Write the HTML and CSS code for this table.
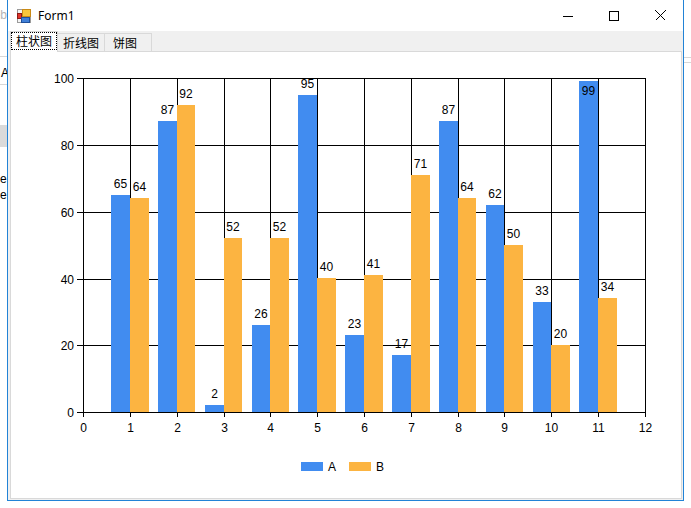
FILE: index.html
```html
<!DOCTYPE html>
<html lang="zh">
<head>
<meta charset="utf-8">
<title>Form1</title>
<link rel="stylesheet" href="styles.css">
</head>
<body>
<div class="desktop">
  <div class="behind behind-left">
    <span class="bk-eb">eb</span>
    <div class="bk-line bk-l1"></div>
    <span class="bk-a">A</span>
    <div class="bk-line bk-l2"></div>
    <div class="bk-block"></div>
    <span class="bk-e1">e</span>
    <span class="bk-e2">e,</span>
  </div>
  <div class="behind behind-right">
    <div class="bk-line bk-r1"></div>
    <div class="bk-line bk-r2"></div>
  </div>

  <div class="window">
    <div class="titlebar">
      <svg class="app-icon" width="16" height="16" viewBox="0 0 16 16">
        <rect x="1.5" y="1.5" width="13" height="13" fill="#f4f4f4" stroke="#9a9a9a"/>
        <rect x="1.5" y="5.5" width="4" height="5" fill="#e0342b" stroke="#8c1a14"/>
        <rect x="6.5" y="1.5" width="8" height="7" fill="#f7c63c" stroke="#c98a16"/>
        <rect x="5.5" y="9.5" width="8" height="5" fill="#3f7fd8" stroke="#1f4f9a"/>
      </svg>
      <span class="title">Form1</span>
      <div class="controls">
        <div class="cbtn"><svg width="10" height="10" viewBox="0 0 10 10"><path d="M0 5.5H10" stroke="#000" stroke-width="1"/></svg></div>
        <div class="cbtn"><svg width="10" height="10" viewBox="0 0 10 10"><rect x="0.5" y="0.5" width="9" height="9" fill="none" stroke="#000"/></svg></div>
        <div class="cbtn"><svg width="11" height="11" viewBox="0 0 11 11"><path d="M0.5 0.5L10.5 10.5M10.5 0.5L0.5 10.5" stroke="#000" stroke-width="1"/></svg></div>
      </div>
    </div>
    <div class="client">
      <div class="tabs">
        <div class="tab tab-active"><span class="focus">柱状图</span></div>
        <div class="tab">折线图</div>
        <div class="tab tab-last">饼图</div>
      </div>
      <div class="page">
        <svg class="chart" width="670" height="446" viewBox="11 52 670 446">
          <g shape-rendering="crispEdges" stroke="#000" stroke-width="1" fill="none">
            <path d="M83.5 78V412M130.5 78V412M177.5 78V412M224.5 78V412M270.5 78V412M317.5 78V412M364.5 78V412M411.5 78V412M458.5 78V412M504.5 78V412M551.5 78V412M598.5 78V412M645.5 78V412"/>
            <path d="M83 78.5H646M83 145.5H646M83 212.5H646M83 279.5H646M83 345.5H646"/>
            <path d="M77 78.5H83M77 145.5H83M77 212.5H83M77 279.5H83M77 345.5H83M77 412.5H83"/>
          </g>
          <g shape-rendering="crispEdges" class="bars-a">
            <rect x="111" y="195" width="19" height="217"/>
            <rect x="158" y="121" width="19" height="291"/>
            <rect x="205" y="405" width="19" height="7"/>
            <rect x="252" y="325" width="18" height="87"/>
            <rect x="298" y="95" width="19" height="317"/>
            <rect x="345" y="335" width="19" height="77"/>
            <rect x="392" y="355" width="19" height="57"/>
            <rect x="439" y="121" width="19" height="291"/>
            <rect x="486" y="205" width="18" height="207"/>
            <rect x="533" y="302" width="18" height="110"/>
            <rect x="579" y="81" width="19" height="331"/>
          </g>
          <g shape-rendering="crispEdges" class="bars-b">
            <rect x="130" y="198" width="19" height="214"/>
            <rect x="177" y="105" width="18" height="307"/>
            <rect x="224" y="238" width="18" height="174"/>
            <rect x="270" y="238" width="19" height="174"/>
            <rect x="317" y="278" width="19" height="134"/>
            <rect x="364" y="275" width="19" height="137"/>
            <rect x="411" y="175" width="19" height="237"/>
            <rect x="458" y="198" width="18" height="214"/>
            <rect x="504" y="245" width="19" height="167"/>
            <rect x="551" y="345" width="19" height="67"/>
            <rect x="598" y="298" width="19" height="114"/>
          </g>
          <g shape-rendering="crispEdges" stroke="#000" stroke-width="1" fill="none">
            <path d="M83 412.5H646"/>
            <path d="M83.5 412V417M130.5 412V417M177.5 412V417M224.5 412V417M270.5 412V417M317.5 412V417M364.5 412V417M411.5 412V417M458.5 412V417M504.5 412V417M551.5 412V417M598.5 412V417M645.5 412V417"/>
          </g>
          <g class="vals" text-anchor="middle">
            <text x="120.5" y="188">65</text>
            <text x="167.5" y="114">87</text>
            <text x="214.5" y="398">2</text>
            <text x="261" y="318">26</text>
            <text x="307.5" y="88">95</text>
            <text x="354.5" y="328">23</text>
            <text x="401.5" y="348">17</text>
            <text x="448.5" y="114">87</text>
            <text x="495" y="198">62</text>
            <text x="542" y="295">33</text>
            <text x="588.5" y="95">99</text>
            <text x="139.5" y="191">64</text>
            <text x="186" y="98">92</text>
            <text x="233" y="231">52</text>
            <text x="279.5" y="231">52</text>
            <text x="326.5" y="271">40</text>
            <text x="373.5" y="268">41</text>
            <text x="420.5" y="168">71</text>
            <text x="467" y="191">64</text>
            <text x="513.5" y="238">50</text>
            <text x="560.5" y="338">20</text>
            <text x="607.5" y="291">34</text>
          </g>
          <g class="axis-y" text-anchor="end">
            <text x="74" y="82.5">100</text>
            <text x="74" y="149.5">80</text>
            <text x="74" y="216.5">60</text>
            <text x="74" y="283.5">40</text>
            <text x="74" y="349.5">20</text>
            <text x="74" y="416.5">0</text>
          </g>
          <g class="axis-x" text-anchor="middle">
            <text x="83.5" y="432">0</text>
            <text x="130.5" y="432">1</text>
            <text x="177.5" y="432">2</text>
            <text x="224.5" y="432">3</text>
            <text x="270.5" y="432">4</text>
            <text x="317.5" y="432">5</text>
            <text x="364.5" y="432">6</text>
            <text x="411.5" y="432">7</text>
            <text x="458.5" y="432">8</text>
            <text x="504.5" y="432">9</text>
            <text x="551.5" y="432">10</text>
            <text x="598.5" y="432">11</text>
            <text x="645.5" y="432">12</text>
          </g>
          <g class="legend">
            <rect class="sw-a" x="301" y="462" width="22" height="9" shape-rendering="crispEdges"/>
            <text x="328" y="471">A</text>
            <rect class="sw-b" x="349" y="462" width="22" height="9" shape-rendering="crispEdges"/>
            <text x="376" y="471">B</text>
          </g>
        </svg>
      </div>
    </div>
  </div>
</div>
</body>
</html>
```
FILE: styles.css
```css
html, body {
  margin: 0;
  padding: 0;
}
body {
  width: 691px;
  height: 508px;
  overflow: hidden;
  background: #ffffff;
  font-family: "Liberation Sans", Arial, sans-serif;
}
.desktop {
  position: relative;
  width: 691px;
  height: 508px;
  overflow: hidden;
  background: #ffffff;
}

/* fragments of the window lying behind */
.behind {
  position: absolute;
  top: 0;
  height: 508px;
  overflow: hidden;
}
.behind-left { left: 0; width: 7px; }
.behind-right { left: 684px; width: 7px; }
.behind span {
  position: absolute;
  font-size: 12px;
  line-height: 14px;
  color: #000;
}
.bk-eb { right: 0; top: 8px; color: #b4b4b4 !important; }
.bk-a { left: 1px; top: 66px; }
.bk-e1 { left: 0; top: 172px; }
.bk-e2 { left: 0; top: 188px; }
.bk-line {
  position: absolute;
  left: 0;
  right: 0;
  height: 1px;
  background: #d7d7d7;
}
.bk-l1 { top: 56px; }
.bk-l2 { top: 84px; }
.bk-r1 { top: 57px; }
.bk-r2 { top: 62px; }
.bk-block {
  position: absolute;
  left: 0;
  right: 0;
  top: 125px;
  height: 22px;
  background: #dadada;
}

/* window */
.window {
  position: absolute;
  left: 7px;
  top: -1px;
  width: 677px;
  height: 502px;
  box-sizing: border-box;
  border: 1px solid #2283d6;
  background: #f0f0f0;
  display: flex;
  flex-direction: column;
}
.titlebar {
  height: 31px;
  flex: none;
  background: #ffffff;
  display: flex;
  align-items: center;
  padding-left: 8px;
}
.app-icon { display: block; flex: none; }
.title {
  margin-left: 6px;
  font-family: "Noto Sans", "Open Sans", sans-serif;
  font-size: 12px;
  color: #000;
  line-height: 16px;
}
.controls {
  margin-left: auto;
  display: flex;
  height: 31px;
}
.cbtn {
  width: 46px;
  height: 31px;
  display: flex;
  align-items: center;
  justify-content: center;
}
.cbtn svg { display: block; shape-rendering: crispEdges; }

.client {
  flex: 1;
  display: flex;
  flex-direction: column;
  padding: 0 1px 1px 2px;
  min-height: 0;
}
.tabs {
  height: 20px;
  flex: none;
  display: flex;
  align-items: flex-end;
  font-family: "Noto Sans CJK SC", sans-serif;
  font-size: 12px;
  color: #000;
}
.tab {
  box-sizing: border-box;
  width: 48px;
  height: 18px;
  border: 1px solid #d9d9d9;
  border-bottom: 0;
  background: #f0f0f0;
  margin-left: -1px;
  padding-left: 5px;
  line-height: 17px;
  white-space: nowrap;
}
.tab-active {
  position: relative;
  z-index: 1;
  margin-left: 0;
  height: 21px;
  margin-bottom: -1px;
  background: #ffffff;
  padding-left: 0;
}
.tab-last { padding-left: 8px; }
.focus {
  display: block;
  box-sizing: border-box;
  width: 46px;
  height: 18px;
  border: 1px dotted #000;
  padding-left: 4px;
  line-height: 16px;
}
.page {
  flex: 1;
  box-sizing: border-box;
  border: 1px solid #d9d9d9;
  background: #ffffff;
  min-height: 0;
}
.chart {
  display: block;
  font-family: "Liberation Sans", Arial, sans-serif;
  font-size: 12px;
}
.chart text { fill: #000; }
.bars-a rect, .sw-a { fill: #418cf0; }
.bars-b rect, .sw-b { fill: #fcb441; }
```
